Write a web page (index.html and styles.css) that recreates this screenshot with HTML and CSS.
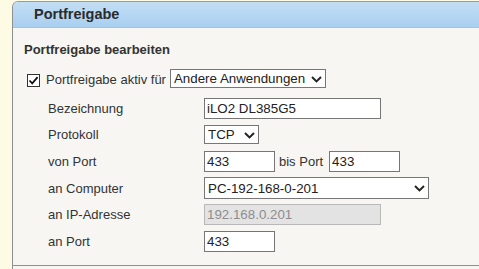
FILE: index.html
```html
<!DOCTYPE html>
<html lang="de">
<head>
<meta charset="utf-8">
<title>Portfreigabe</title>
<link rel="stylesheet" href="styles.css">
</head>
<body>
<div class="panel">
  <div class="panel-head">Portfreigabe</div>
  <div class="panel-body">
    <div class="section-title">Portfreigabe bearbeiten</div>
    <div class="check-row">
      <span class="check">
        <input type="checkbox" checked>
        <svg class="check-mark" width="13" height="13" viewBox="0 0 13 13"><path d="M2.5 6.5 L5.2 9.3 L10.6 3.2" fill="none" stroke="#111" stroke-width="1.8"/></svg>
      </span>
      <span class="check-label">Portfreigabe aktiv für</span>
      <span class="sel sel-app">
        <select><option>Andere Anwendungen</option></select>
        <svg class="chev" width="11" height="7" viewBox="0 0 11 7"><path d="M1 1 L5.5 5.5 L10 1" fill="none" stroke="#222" stroke-width="1.9"/></svg>
      </span>
    </div>
    <div class="form">
      <label>Bezeichnung</label>
      <div class="field"><input class="w-long" type="text" value="iLO2 DL385G5"></div>

      <label>Protokoll</label>
      <div class="field">
        <span class="sel sel-proto">
          <select><option>TCP</option></select>
          <svg class="chev" width="11" height="7" viewBox="0 0 11 7"><path d="M1 1 L5.5 5.5 L10 1" fill="none" stroke="#222" stroke-width="1.9"/></svg>
        </span>
      </div>

      <label>von Port</label>
      <div class="field">
        <input class="w-short" type="text" value="433">
        <span class="bis">bis Port</span>
        <input class="w-short" type="text" value="433">
      </div>

      <label>an Computer</label>
      <div class="field">
        <span class="sel sel-pc">
          <select><option>PC-192-168-0-201</option></select>
          <svg class="chev" width="11" height="7" viewBox="0 0 11 7"><path d="M1 1 L5.5 5.5 L10 1" fill="none" stroke="#222" stroke-width="1.9"/></svg>
        </span>
      </div>

      <label>an IP-Adresse</label>
      <div class="field"><input class="w-long" type="text" value="192.168.0.201" disabled></div>

      <label>an Port</label>
      <div class="field"><input class="w-short" type="text" value="433"></div>
    </div>
  </div>
  <div class="panel-foot"></div>
</div>
</body>
</html>
```
FILE: styles.css
```css
html, body {
  margin: 0;
  padding: 0;
}
body {
  background: #fdfbe4;
  font-family: "Liberation Sans", Arial, sans-serif;
  font-size: 13px;
  color: #333;
}
.panel {
  margin: 1px 0 0 12px;
  border-left: 1px solid #8f8f8f;
  border-top: 1px solid #9b9b9b;
  border-top-left-radius: 6px;
  background: #f7f6f2;
  overflow: hidden;
}
.panel-head {
  height: 25px;
  line-height: 25px;
  padding-left: 21px;
  background: linear-gradient(#c3def4, #a8cff0);
  border-bottom: 1px solid #a9c3d9;
  font-weight: bold;
  font-size: 14.5px;
  color: #2b2b2b;
}
.panel-body {
  padding: 14px 0 0 11px;
}
.section-title {
  font-weight: bold;
  font-size: 13px;
  line-height: 16px;
  color: #333;
}
.check-row {
  display: flex;
  align-items: center;
  height: 19px;
  margin-top: 11px;
  padding-left: 3px;
}
.check {
  position: relative;
  width: 13px;
  height: 13px;
  margin-top: 3px;
}
.check input {
  appearance: none;
  -webkit-appearance: none;
  margin: 0;
  width: 13px;
  height: 13px;
  border: 1px solid #333;
  background: #fff;
  box-sizing: border-box;
}
.check-mark {
  position: absolute;
  left: 0;
  top: 0;
  pointer-events: none;
}
.check-label {
  margin-left: 6px;
  margin-top: 2px;
}
.sel {
  position: relative;
  display: inline-block;
}
.sel select {
  appearance: none;
  -webkit-appearance: none;
  margin: 0;
  border: 1px solid #777;
  border-radius: 0;
  background: #fff;
  font-family: "Liberation Sans", Arial, sans-serif;
  font-size: 13.33px;
  color: #222;
  padding: 0 0 0 3px;
  box-sizing: border-box;
  display: block;
}
.chev {
  position: absolute;
  right: 4px;
  top: 50%;
  margin-top: -3px;
  pointer-events: none;
}
.sel-app {
  margin-left: 4px;
}
.sel-app select {
  width: 156px;
  height: 19px;
}
.sel-proto select {
  width: 55px;
  height: 19px;
}
.sel-pc select {
  width: 225px;
  height: 22px;
}
.form {
  display: grid;
  grid-template-columns: 156px 1fr;
  grid-auto-rows: 26.6px;
  align-items: center;
  margin-top: 7px;
  padding-left: 24px;
}
.form label {
  color: #333;
}
.field {
  display: flex;
  align-items: center;
}
.field input {
  margin: 0;
  height: 21px;
  box-sizing: border-box;
  border: 1px solid #767676;
  border-radius: 0;
  background: #fff;
  font-family: "Liberation Sans", Arial, sans-serif;
  font-size: 13.33px;
  color: #222;
  padding: 0 2px;
}
.field input:disabled {
  background: #e3e3e3;
  border-color: #b8b8b8;
  color: #8d8d8d;
}
.w-long {
  width: 177px;
}
.w-short {
  width: 71px;
}
.bis {
  margin: 0 6px 0 4px;
}
.panel-foot {
  margin-top: 10px;
  height: 3px;
  border-top: 1px solid #8f8f8f;
}
```
